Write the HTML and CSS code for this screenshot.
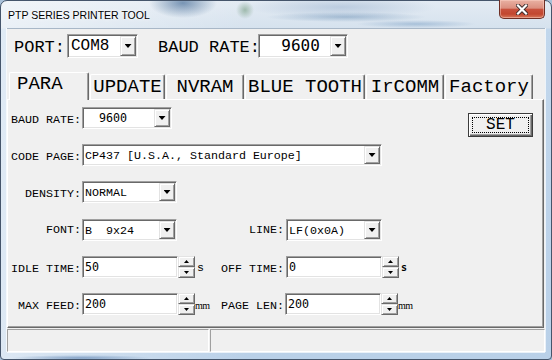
FILE: index.html
```html
<!DOCTYPE html>
<html lang="en">

<head>
    <meta charset="UTF-8">
    <title>PTP SERIES PRINTER TOOL</title>

    <link rel="stylesheet" href="styles.css">
</head>

<body>

    <div class="window">
        <div class="titlebar">
            <span class="title">PTP SERIES PRINTER TOOL</span>
            <div class="close">
                <svg width="12" height="11" viewBox="0 0 12 11">
                    <path d="M2 1.5 L10 9.5 M10 1.5 L2 9.5" stroke="#3b2b2b" stroke-width="4" stroke-linecap="square"></path>
                    <path d="M2 1.5 L10 9.5 M10 1.5 L2 9.5" stroke="#fff" stroke-width="2.2" stroke-linecap="square"></path>
                </svg>
            </div>
        </div>

        <div class="client">

            <div class="toprow">
                <span class="biglabel port">PORT:</span>
                <div class="combo big com">
                    <span class="val">COM8</span>
                    <span class="drop"></span>
                </div>
                <span class="biglabel baud">BAUD RATE:</span>
                <div class="combo big baudtop">
                    <span class="val num">  9600</span>
                    <span class="drop"></span>
                </div>
            </div>

            <div class="tabs">
                <div class="tab active t-para">PARA</div>
                <div class="tab t-update">UPDATE</div>
                <div class="tab t-nvram">NVRAM</div>
                <div class="tab t-blue">BLUE TOOTH</div>
                <div class="tab t-ir">IrCOMM</div>
                <div class="tab t-factory">Factory</div>
            </div>

            <div class="panel">
                <div class="form">
                    <span class="lbl">BAUD RATE:</span>
                    <div class="combo w90">
                        <span class="val num">  9600</span>
                        <span class="drop"></span>
                    </div>
                    <button class="set">SET</button>

                    <span class="lbl">CODE PAGE:</span>
                    <div class="combo wide">
                        <span class="val">CP437 [U.S.A., Standard Europe]</span>
                        <span class="drop"></span>
                    </div>

                    <span class="lbl">DENSITY:</span>
                    <div class="combo w95">
                        <span class="val">NORMAL</span>
                        <span class="drop"></span>
                    </div>

                    <span class="lbl r4">FONT:</span>
                    <div class="combo w95 r4">
                        <span class="val">B  9x24</span>
                        <span class="drop"></span>
                    </div>
                    <span class="lbl lbl2 r4">LINE:</span>
                    <div class="combo w96 r4">
                        <span class="val">LF(0x0A)</span>
                        <span class="drop"></span>
                    </div>

                    <span class="lbl">IDLE TIME:</span>
                    <div class="field">
                        <div class="edit"><span class="val num">50</span></div>
                        <div class="spin"><span class="up"></span><span class="down"></span></div>
                        <span class="unit">s</span>
                    </div>
                    <span class="lbl lbl2">OFF TIME:</span>
                    <div class="field">
                        <div class="edit"><span class="val num">0</span></div>
                        <div class="spin"><span class="up"></span><span class="down"></span></div>
                        <span class="unit sans">s</span>
                    </div>

                    <span class="lbl">MAX FEED:</span>
                    <div class="field">
                        <div class="edit"><span class="val num">200</span></div>
                        <div class="spin"><span class="up"></span><span class="down"></span></div>
                        <span class="unit mm">mm</span>
                    </div>
                    <span class="lbl lbl2">PAGE LEN:</span>
                    <div class="field left1">
                        <div class="edit"><span class="val num">200</span></div>
                        <div class="spin"><span class="up"></span><span class="down"></span></div>
                        <span class="unit mm">mm</span>
                    </div>
                </div>
            </div>

            <div class="status">
                <div class="cell first"></div>
                <div class="cell"></div>
            </div>

        </div>
    </div>

</body>

</html>
```

FILE: styles.css
```css
* {
    box-sizing: border-box;
}

body {
    margin: 0;
    width: 552px;
    height: 360px;
    overflow: hidden;
    background: #a9c1d9;
}

/* window frame */

.window {
    width: 552px;
    height: 360px;
    border: 1px solid #45556b;
    border-radius: 7px 7px 4px 4px;
    display: flex;
    flex-direction: column;
    background:
        radial-gradient(ellipse 34px 15px at 182px 2px, rgba(60, 100, 145, .65), rgba(60, 100, 145, 0)),
        radial-gradient(ellipse 9px 9px at 244px 9px, rgba(95, 140, 105, .5), rgba(95, 140, 105, 0)),
        radial-gradient(ellipse 80px 5px at 345px 16px, rgba(95, 135, 175, .45), rgba(95, 135, 175, 0)),
        radial-gradient(ellipse 60px 4px at 415px 23px, rgba(110, 150, 190, .45), rgba(110, 150, 190, 0)),
        radial-gradient(ellipse 95px 11px at 340px 6px, rgba(150, 175, 205, .5), rgba(150, 175, 205, 0)),
        radial-gradient(ellipse 70px 3px at 80px 357px, rgba(80, 120, 170, .6), rgba(80, 120, 170, 0)),
        linear-gradient(to right, rgba(255, 255, 255, .5), rgba(255, 255, 255, 0) 45%),
        linear-gradient(#e3ebf3, #d6e2ee 27px, #c2d7ec 28px, #b9d0e8);
}

.titlebar {
    height: 27px;
    flex: none;
    display: flex;
    align-items: flex-start;
}

.title {
    margin: 8px 0 0 7px;
    font: 10.5px/12px "Liberation Sans", Arial, sans-serif;
    color: #000;
    text-shadow: 0 0 5px #fff, 0 0 2px #fff;
}

.close {
    margin: -1px 6px 0 auto;
    width: 46px;
    height: 19px;
    border: 1px solid #6e2f25;
    border-top: none;
    border-radius: 0 0 5px 5px;
    background: linear-gradient(#e9b1a3, #db8f7f 45%, #c8513d 52%, #c2472f 78%, #d7785b);
    box-shadow: inset 0 0 0 1px rgba(255, 215, 205, .45);
    display: flex;
    align-items: center;
    justify-content: center;
}

.client {
    flex: none;
    height: 324px;
    margin: 0 6px;
    background: #f0f0f0;
    border-top: 1px solid #a8b7c7;
    box-shadow: -1px 0 rgba(255, 255, 255, .7), 1px 0 rgba(255, 255, 255, .7), 0 1px rgba(255, 255, 255, .7);
    display: flex;
    flex-direction: column;
}

/* top row */

.toprow {
    height: 43px;
    flex: none;
    display: flex;
    align-items: flex-start;
    padding: 5px 0 0 7px;
}

.biglabel {
    font: 17px/28px "Liberation Mono", "Courier New", monospace;
    color: #000;
    white-space: nowrap;
}

.port {
    width: 53px;
}

.baud {
    width: 100px;
    margin-left: 20px;
}

/* combo boxes and edits */

.combo,
.edit {
    height: 22px;
    display: flex;
    background: #fff;
    border: 1px solid;
    border-color: #a0a0a0 #fff #fff #a0a0a0;
    padding: 1px;
    box-shadow: inset 1px 1px #696969, inset -1px -1px #e3e3e3;
}

.combo.big {
    height: 24px;
}

.com {
    width: 71px;
}

.baudtop {
    width: 90px;
}

.w90 {
    width: 90px;
}

.w95 {
    width: 95px;
}

.w96 {
    width: 96px;
}

.wide {
    width: 300px;
    grid-column: 2 / span 3;
}

.val {
    flex: 1;
    padding: 1px 0 0 1px;
    font: 11.67px/18px "Liberation Mono", "Courier New", monospace;
    color: #000;
    white-space: pre;
    overflow: hidden;
}

.val.num {
    padding-top: 0;
    font-family: "DejaVu Sans Mono", monospace;
}

.big .val {
    padding: 0 0 0 2px;
    font-size: 16px;
    line-height: 20px;
}

.drop,
.spin span {
    width: 16px;
    flex: none;
    background: #f0f0f0;
    border: 1px solid;
    border-color: #e3e3e3 #696969 #696969 #e3e3e3;
    box-shadow: inset 1px 1px #fff, inset -1px -1px #a0a0a0;
    display: flex;
    align-items: center;
    justify-content: center;
}

.drop::after {
    content: "";
    width: 7px;
    height: 4px;
    background: #000;
    clip-path: polygon(0 0, 100% 0, 50% 100%);
}

/* tabs and panel */

.tabs {
    height: 27px;
    flex: none;
    display: flex;
    align-items: flex-end;
    padding-left: 2px;
}

.tab {
    height: 25px;
    margin-right: 1px;
    background: #f0f0f0;
    border-left: 1px solid #fff;
    border-top: 1px solid #fff;
    border-right: 1px solid #696969;
    border-radius: 2px 2px 0 0;
    box-shadow: inset -1px 0 #a0a0a0;
    font: 19px/24px "Liberation Mono", "Courier New", monospace;
    color: #000;
    text-align: center;
    white-space: nowrap;
}

.tab.active {
    height: 28px;
    margin-bottom: -1px;
    padding-left: 7px;
    text-align: left;
    line-height: 22px;
    position: relative;
    z-index: 1;
}

.t-para {
    width: 80px;
}

.t-update {
    width: 75px;
}

.t-nvram {
    width: 78px;
}

.t-blue {
    width: 120px;
}

.t-ir {
    width: 78px;
}

.t-factory {
    width: 88px;
}

.panel {
    height: 229px;
    flex: none;
    margin-right: 1px;
    border: 1px solid;
    border-color: #fff #696969 #696969 #fff;
    box-shadow: inset -1px -1px #a0a0a0;
    padding-top: 7px;
}

.form {
    display: grid;
    grid-template-columns: 74px 118px 86px 1fr;
    grid-template-rows: 22px 22px 22px 23px 22px 22px;
    row-gap: 15px;
    align-items: start;
    justify-items: start;
}

.lbl {
    grid-column: 1;
    justify-self: stretch;
    text-align: right;
    padding: 2px 1px 0 0;
    font: 11.67px/22px "Liberation Mono", "Courier New", monospace;
    color: #000;
    white-space: nowrap;
}

.lbl2 {
    grid-column: 3;
    padding-right: 2px;
}

.r4 {
    align-self: end;
}

.set {
    grid-column: 4;
    justify-self: end;
    margin: 6px 10px 0 0;
    width: 65px;
    height: 24px;
    position: relative;
    padding: 0;
    background: #f0f0f0;
    border: 1px solid #3c3c3c;
    box-shadow: inset 1px 1px #fff, inset -1px -1px #696969, inset -2px -2px #a0a0a0;
    font: 16px/22px "Liberation Mono", "Courier New", monospace;
    color: #000;
}

.set::after {
    content: "";
    position: absolute;
    inset: 3px;
    border: 1px dotted #000;
}

.field {
    display: flex;
    align-items: flex-start;
    height: 22px;
}

.field.left1 {
    margin-left: -1px;
}

.field .edit {
    width: 96px;
}

.spin {
    width: 17px;
    height: 22px;
    display: flex;
    flex-direction: column;
}

.spin span {
    width: 17px;
    height: 11px;
}

.spin span::after {
    content: "";
    width: 5px;
    height: 3px;
    background: #000;
}

.spin .up::after {
    clip-path: polygon(50% 0, 100% 100%, 0 100%);
}

.spin .down::after {
    clip-path: polygon(0 0, 100% 0, 50% 100%);
}

.unit {
    margin-left: 2px;
    font: 11.67px/24px "Liberation Mono", "Courier New", monospace;
    color: #000;
}

.unit.sans {
    margin-left: 2px;
    font-family: "DejaVu Sans Mono", monospace;
    font-weight: bold;
    font-size: 10px;
}

.unit.mm {
    margin-left: 0;
    font: 10px/26px "Liberation Serif", serif;
    letter-spacing: -.5px;
}

/* status bar */

.status {
    height: 23px;
    flex: none;
    margin-top: 1px;
    display: flex;
    gap: 1px;
}

.cell {
    flex: 1;
    border: 1px solid;
    border-color: #a0a0a0 #fff #fff #a0a0a0;
}

.cell.first {
    flex: none;
    width: 202px;
}
```
